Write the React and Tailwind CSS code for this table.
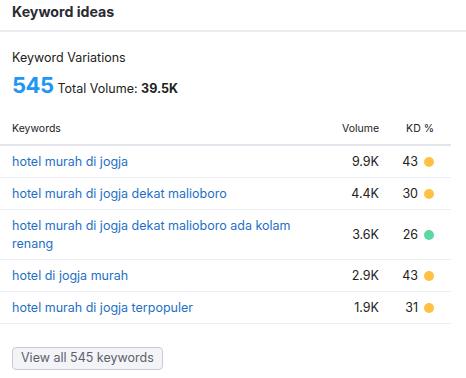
import React from "react";

const rows = [
  { k: "hotel murah di jogja", v: "9.9K", kd: 43, c: "bg-[#ffc043]" },
  { k: "hotel murah di jogja dekat malioboro", v: "4.4K", kd: 30, c: "bg-[#ffc043]" },
  { k: "hotel murah di jogja dekat malioboro ada kolam renang", v: "3.6K", kd: 26, c: "bg-[#59d8a1]" },
  { k: "hotel di jogja murah", v: "2.9K", kd: 43, c: "bg-[#ffc043]" },
  { k: "hotel murah di jogja terpopuler", v: "1.9K", kd: 31, c: "bg-[#ffc043]" },
];

export default function App() {
  return (
    <div className="w-[466px] h-[378px] bg-white text-[#222] font-['Inter',sans-serif] overflow-hidden">
      <div className="h-[32px] px-3 flex items-start pt-[2px] border-b-2 border-[#ebecf1]">
        <h2 className="text-[14.2px] leading-[20px] font-bold text-[#2b2b33]">Keyword ideas</h2>
      </div>
      <div className="px-3 pt-[17px]">
        <div className="text-[12.5px] leading-[18px]">Keyword Variations</div>
        <div className="flex items-baseline gap-[4px] mt-[3px]">
          <span className="text-[22px] leading-[30px] font-bold tracking-[-0.5px] text-[#2196f3]">545</span>
          <span className="text-[12.5px]">
            Total Volume: <span className="font-bold">39.5K</span>
          </span>
        </div>
      </div>
      <div className="w-[451px] mt-[21px]">
        <div className="flex items-start pl-3 pr-[17px] leading-[16px] text-[10.5px] border-b-2 border-[#e4e5ec] pb-[7px]">
          <div className="flex-1">Keywords</div>
          <div className="w-[60px] text-right">Volume</div>
          <div className="w-[55px] text-right">KD %</div>
        </div>
        {rows.map((r, i) => (
          <div
            key={i}
            className="flex items-center pl-3 pr-[17px] py-[6.5px] text-[12.5px] leading-[18px] border-b border-[#eeeff3]"
          >
            <div className="flex-1 text-[#1f6fc5]">{r.k}</div>
            <div className="w-[60px] text-right">{r.v}</div>
            <div className="w-[55px] flex items-center justify-end gap-[6px]">
              <span>{r.kd}</span>
              <span className={`w-[10px] h-[10px] rounded-full ${r.c}`} />
            </div>
          </div>
        ))}
      </div>
      <div className="px-3 pt-[20px]">
        <button className="h-[23px] px-[8px] text-[12.5px] text-[#5d606b] bg-[#f3f4f8] border border-[#c9ccd4] rounded-[4px] leading-none">
          View all 545 keywords
        </button>
      </div>
    </div>
  );
}
